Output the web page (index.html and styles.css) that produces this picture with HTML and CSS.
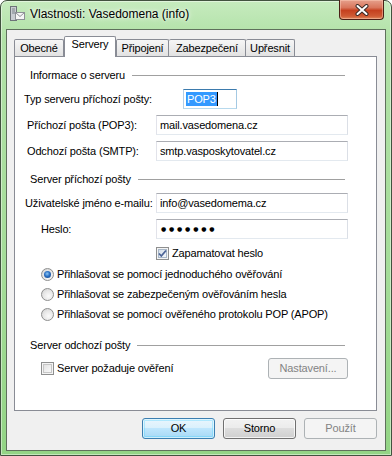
FILE: index.html
```html
<!DOCTYPE html>
<html lang="cs">
<head>
    <meta charset="UTF-8">
    <meta name="viewport" content="width=device-width, initial-scale=1.0">
    <title>Vlastnosti: Vasedomena (info)</title>
    <link rel="stylesheet" href="styles.css">
</head>
<body>
    <div class="window">
        <div class="titlebar">
            <svg class="app-icon" width="16" height="16" viewBox="0 0 16 16">
                <rect x="1.5" y="0.5" width="6" height="14" fill="#c9cdd2" stroke="#6d7378"/>
                <path d="M3 3h3M3 5h3M3 7h3" stroke="#7d848b"/>
                <rect x="6.5" y="6.5" width="9" height="7" fill="#f6f6f6" stroke="#8d9196"/>
                <path d="M6.5 6.5l4.5 4 4.5-4" fill="none" stroke="#8d9196"/>
            </svg>
            <div class="title">Vlastnosti: Vasedomena (info)</div>
            <div class="close">
                <svg width="14" height="12" viewBox="0 0 14 12">
                    <path d="M2.5 2l9 8M11.5 2l-9 8" stroke="#3a2a26" stroke-width="4" stroke-linecap="round"/>
                    <path d="M2.5 2l9 8M11.5 2l-9 8" stroke="#ffffff" stroke-width="2" stroke-linecap="round"/>
                </svg>
            </div>
        </div>

        <div class="client">
            <div class="tabs">
                <div class="tab tab-obecne">Obecné</div>
                <div class="tab tab-active tab-servery">Servery</div>
                <div class="tab tab-pripojeni">Připojení</div>
                <div class="tab tab-zabezpeceni">Zabezpečení</div>
                <div class="tab tab-upresnit">Upřesnit</div>
            </div>

            <div class="panel">
                <div class="group-title first"><span>Informace o serveru</span><i class="rule"></i></div>

                <div class="field field-first">
                    <label class="lbl lbl-type">Typ serveru příchozí pošty:</label>
                    <div class="textbox textbox-short focused"><span class="sel">POP3</span><span class="caret"></span></div>
                </div>
                <div class="field">
                    <label class="lbl lbl-indent">Příchozí pošta (POP3):</label>
                    <div class="textbox">mail.vasedomena.cz</div>
                </div>
                <div class="field">
                    <label class="lbl lbl-indent">Odchozí pošta (SMTP):</label>
                    <div class="textbox">smtp.vasposkytovatel.cz</div>
                </div>

                <div class="group-title second"><span>Server příchozí pošty</span><i class="rule"></i></div>

                <div class="field field-user">
                    <label class="lbl">Uživatelské jméno e-mailu:</label>
                    <div class="textbox">info@vasedomema.cz</div>
                </div>
                <div class="field">
                    <label class="lbl lbl-pass">Heslo:</label>
                    <div class="textbox password">●●●●●●●</div>
                </div>

                <div class="check-row remember">
                    <span class="checkbox checked">
                        <svg width="9" height="9" viewBox="0 0 9 9"><path d="M1 4.5l2.3 2.5L8 1.5" fill="none" stroke="#4b6396" stroke-width="1.8"/></svg>
                    </span>
                    <span>Zapamatovat heslo</span>
                </div>

                <div class="radio-row radio-first"><span class="radio selected"></span><span>Přihlašovat se pomocí jednoduchého ověřování</span></div>
                <div class="radio-row"><span class="radio"></span><span>Přihlašovat se zabezpečeným ověřováním hesla</span></div>
                <div class="radio-row"><span class="radio"></span><span>Přihlašovat se pomocí ověřeného protokolu POP (APOP)</span></div>

                <div class="group-title third"><span>Server odchozí pošty</span><i class="rule"></i></div>

                <div class="outgoing">
                    <div class="check-row">
                        <span class="checkbox"></span>
                        <span>Server požaduje ověření</span>
                    </div>
                    <button class="btn btn-disabled btn-settings">Nastavení...</button>
                </div>
            </div>

            <div class="buttons">
                <button class="btn btn-default">OK</button>
                <button class="btn">Storno</button>
                <button class="btn btn-disabled">Použít</button>
            </div>
        </div>
    </div>
</body>
</html>
```

FILE: styles.css
```css
* {
    margin: 0;
    padding: 0;
    box-sizing: border-box;
}

body {
    width: 392px;
    height: 456px;
    overflow: hidden;
    font-family: "Liberation Sans", Arial, sans-serif;
    font-size: 11px;
    letter-spacing: -0.15px;
    color: #000;
    background: #fff;
}

.window {
    height: 456px;
    display: flex;
    flex-direction: column;
    padding: 0 5px 4px 5px;
    border: 1px solid #42523f;
    border-radius: 7px 7px 0 0;
    background: linear-gradient(180deg, #c6ebbe 0%, #b1e1a7 8%, #a4dc98 60%, #93d485 100%);
    box-shadow: inset 0 0 0 1px rgba(255, 255, 255, 0.45);
}

/* title bar */
.titlebar {
    height: 28px;
    display: flex;
    align-items: flex-start;
}

.app-icon {
    margin: 5px 0 0 3px;
    flex: none;
}

.title {
    flex: 1;
    margin: 6px 0 0 5px;
    font-size: 12px;
    line-height: 15px;
    letter-spacing: 0;
    color: #000;
    text-shadow: 0 0 6px rgba(255, 255, 255, 0.95), 0 0 3px rgba(255, 255, 255, 0.9);
}

.close {
    width: 45px;
    height: 20px;
    margin: -1px 2px 0 0;
    border: 1px solid #4a1f16;
    border-top: 0;
    border-radius: 0 0 4px 4px;
    background: linear-gradient(180deg, #e6a08c 0%, #d9765c 40%, #c5401f 55%, #cf5a34 85%, #e08a5e 100%);
    box-shadow: inset 0 0 0 1px rgba(255, 210, 190, 0.45);
    display: flex;
    align-items: center;
    justify-content: center;
}

/* client area */
.client {
    flex: 1;
    display: flex;
    flex-direction: column;
    background: #f0f0f0;
    border: 1px solid #5f705c;
    padding: 6px 8px 0 7px;
}

.tabs {
    display: flex;
    align-items: flex-end;
    height: 21px;
    position: relative;
    z-index: 1;
}

.tab {
    height: 17px;
    margin-bottom: 1px;
    padding-top: 2px;
    border: 1px solid #898c95;
    border-bottom: 0;
    border-left-width: 0;
    border-radius: 2px 2px 0 0;
    background: linear-gradient(180deg, #f6f6f6 0%, #ececec 50%, #e2e2e2 100%);
    line-height: 13px;
    text-align: center;
    white-space: nowrap;
}

.tab-obecne { width: 50px; border-left-width: 1px; }
.tab-servery { width: 52px; }
.tab-pripojeni { width: 53px; border-left-width: 1px; }
.tab-zabezpeceni { width: 77px; }
.tab-upresnit { width: 49px; }

.tab-active {
    height: 21px;
    margin-bottom: 0;
    padding-top: 1px;
    border-left-width: 1px;
    background: #fff;
}

.panel {
    height: 355px;
    margin-top: -1px;
    background: #fff;
    border: 1px solid #898c95;
    padding: 0 28px 0 0;
}

.group-title {
    display: flex;
    align-items: center;
    height: 13px;
    line-height: 13px;
    margin-left: 15px;
    margin-right: 3px;
    white-space: nowrap;
}

.group-title .rule {
    flex: 1;
    height: 1px;
    margin-left: 7px;
    background: #a0a0a0;
}

.group-title.first { margin-top: 12px; }
.group-title.second { margin-top: 12px; }
.group-title.third { margin-top: 18px; }

.field {
    display: flex;
    align-items: center;
    height: 20px;
    margin-top: 6px;
}

.field-first { margin-top: 7px; }
.field-user { margin-top: 7px; }

.lbl {
    width: 141px;
    flex: none;
    padding-left: 10px;
    line-height: 13px;
    white-space: nowrap;
}

.lbl-type { width: 168px; padding-left: 9px; }
.lbl-indent { padding-left: 12px; }
.lbl-pass { padding-left: 26px; }

.textbox {
    flex: 1;
    height: 20px;
    padding-left: 3px;
    line-height: 18px;
    border: 1px solid;
    border-color: #abadb3 #dbdfe6 #e3e9ef #e2e3ea;
    background: #fff;
    white-space: nowrap;
    overflow: hidden;
}

.textbox-short {
    flex: none;
    width: 54px;
    padding-left: 2px;
}

.focused {
    border-color: #3d7bad #a4c9e3 #b7d9ed #b5cfe7;
    display: flex;
    align-items: center;
}

.sel {
    background: #3399ff;
    color: #fff;
    line-height: 14px;
    padding: 0 1px;
}

.caret {
    width: 1px;
    height: 14px;
    background: #000;
}

.password {
    font-family: "DejaVu Sans", sans-serif;
    font-size: 6px;
    letter-spacing: 2.8px;
    padding-left: 4px;
}

.check-row,
.radio-row {
    display: flex;
    align-items: center;
    height: 13px;
    line-height: 13px;
    white-space: nowrap;
}

.remember {
    margin-top: 8px;
    padding-left: 141px;
}

.radio-row {
    margin-top: 7px;
    padding-left: 26px;
}

.radio-first { margin-top: 8px; }

.checkbox {
    width: 13px;
    height: 13px;
    flex: none;
    margin-right: 3px;
    border: 1px solid #8e8f8f;
    background: linear-gradient(135deg, #dcdcdc 0%, #f1f1f1 60%, #fdfdfd 100%);
    box-shadow: inset 0 0 0 1px #f4f4f4, inset 0 0 0 2px #c6c6c6;
    display: flex;
    align-items: center;
    justify-content: center;
}

.checkbox.checked {
    background: linear-gradient(135deg, #cdd9e6 0%, #eef2f7 70%, #ffffff 100%);
    box-shadow: inset 0 0 0 1px #f4f4f4, inset 0 0 0 2px #a9b8c9;
}

.radio {
    width: 13px;
    height: 13px;
    flex: none;
    margin-right: 3px;
    border-radius: 50%;
    border: 1px solid #8e8f8f;
    background: radial-gradient(circle at 60% 65%, #fbfbfb 0%, #e6e6e6 55%, #c9c9c9 100%);
    display: flex;
    align-items: center;
    justify-content: center;
}

.radio.selected::after {
    content: "";
    width: 7px;
    height: 7px;
    border-radius: 50%;
    background: radial-gradient(circle at 45% 40%, #8ec8f4 0%, #2a6fc3 45%, #133f7d 100%);
}

.outgoing {
    display: flex;
    align-items: center;
    justify-content: space-between;
    height: 21px;
    margin-top: 6px;
    padding-left: 26px;
}

/* buttons */
.btn {
    width: 73px;
    height: 21px;
    border: 1px solid #707070;
    border-radius: 3px;
    background: linear-gradient(180deg, #f2f2f2 0%, #ebebeb 50%, #dddddd 50%, #cfcfcf 100%);
    box-shadow: inset 0 0 0 1px rgba(255, 255, 255, 0.75);
    font-family: "Liberation Sans", Arial, sans-serif;
    font-size: 11px;
    letter-spacing: -0.15px;
    color: #000;
    line-height: 19px;
    text-align: center;
}

.btn-default {
    border-color: #3c7fb1;
    background: linear-gradient(180deg, #eaf6fd 0%, #d9f0fc 50%, #bee6fd 50%, #a7d9f5 100%);
    box-shadow: inset 0 0 0 1px rgba(255, 255, 255, 0.6), inset 0 0 0 2px rgba(72, 208, 255, 0.35);
}

.btn-disabled {
    border-color: #adb2b5;
    background: #f4f4f4;
    box-shadow: none;
    color: #838383;
}

.btn-settings {
    width: 80px;
}

.buttons {
    display: flex;
    justify-content: flex-end;
    gap: 8px;
    margin-top: 7px;
}
```
